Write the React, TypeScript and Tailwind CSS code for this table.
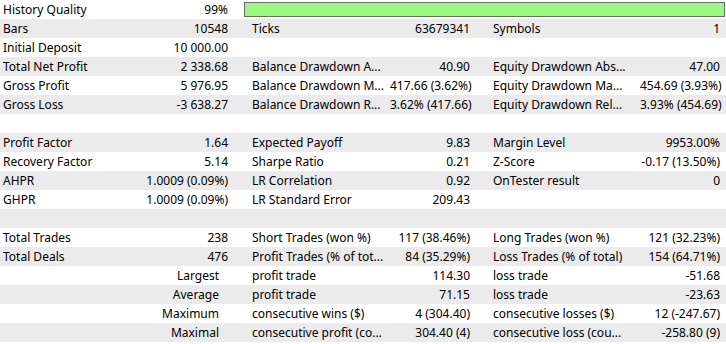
import React from 'react'

type Row = {
  l1?: string
  v1?: string
  l2?: string
  v2?: string
  l3?: string
  v3?: string
  right?: string
  bar?: boolean
}

const rows: Row[] = [
  { l1: 'History Quality', v1: '99%', bar: true },
  { l1: 'Bars', v1: '10548', l2: 'Ticks', v2: '63679341', l3: 'Symbols', v3: '1' },
  { l1: 'Initial Deposit', v1: '10 000.00' },
  { l1: 'Total Net Profit', v1: '2 338.68', l2: 'Balance Drawdown A...', v2: '40.90', l3: 'Equity Drawdown Abs...', v3: '47.00' },
  { l1: 'Gross Profit', v1: '5 976.95', l2: 'Balance Drawdown M...', v2: '417.66 (3.62%)', l3: 'Equity Drawdown Ma...', v3: '454.69 (3.93%)' },
  { l1: 'Gross Loss', v1: '-3 638.27', l2: 'Balance Drawdown R...', v2: '3.62% (417.66)', l3: 'Equity Drawdown Rel...', v3: '3.93% (454.69)' },
  {},
  { l1: 'Profit Factor', v1: '1.64', l2: 'Expected Payoff', v2: '9.83', l3: 'Margin Level', v3: '9953.00%' },
  { l1: 'Recovery Factor', v1: '5.14', l2: 'Sharpe Ratio', v2: '0.21', l3: 'Z-Score', v3: '-0.17 (13.50%)' },
  { l1: 'AHPR', v1: '1.0009 (0.09%)', l2: 'LR Correlation', v2: '0.92', l3: 'OnTester result', v3: '0' },
  { l1: 'GHPR', v1: '1.0009 (0.09%)', l2: 'LR Standard Error', v2: '209.43' },
  {},
  { l1: 'Total Trades', v1: '238', l2: 'Short Trades (won %)', v2: '117 (38.46%)', l3: 'Long Trades (won %)', v3: '121 (32.23%)' },
  { l1: 'Total Deals', v1: '476', l2: 'Profit Trades (% of tot...', v2: '84 (35.29%)', l3: 'Loss Trades (% of total)', v3: '154 (64.71%)' },
  { right: 'Largest', l2: 'profit trade', v2: '114.30', l3: 'loss trade', v3: '-51.68' },
  { right: 'Average', l2: 'profit trade', v2: '71.15', l3: 'loss trade', v3: '-23.63' },
  { right: 'Maximum', l2: 'consecutive wins ($)', v2: '4 (304.40)', l3: 'consecutive losses ($)', v3: '12 (-247.67)' },
  { right: 'Maximal', l2: 'consecutive profit (co...', v2: '304.40 (4)', l3: 'consecutive loss (cou...', v3: '-258.80 (9)' },
]

const App = () => {
  return (
    <div className='w-[726px] h-[344px] bg-white text-black text-[12px] leading-[19px] overflow-hidden' style={{ fontFamily: '"Noto Sans", "Open Sans", sans-serif' }}>
      {rows.map((r, i) => (
        <div key={i} className={`grid grid-cols-[140px_100px_150px_90px_160px_86px] h-[19px] whitespace-nowrap ${i % 2 ? 'bg-[#ebebeb]' : 'bg-white'}`}>
          {r.right ? (
            <div className='col-span-2 text-right pr-[21px]'>{r.right}</div>
          ) : (
            <>
              <div className='pl-[3px]'>{r.l1}</div>
              <div className='text-right pr-[12px]'>{r.v1}</div>
            </>
          )}
          {r.bar ? (
            <div className='col-span-4 pl-[4px] pr-[1px] pt-[2px]'>
              <div className='h-[15px] bg-[#99f880] border border-[#6a6a6a]' />
            </div>
          ) : (
            <>
              <div className='pl-[12px]'>{r.l2}</div>
              <div className='text-right pr-[10px]'>{r.v2}</div>
              <div className='pl-[13px]'>{r.l3}</div>
              <div className='text-right pr-[6px]'>{r.v3}</div>
            </>
          )}
        </div>
      ))}
    </div>
  )
}

export default App
